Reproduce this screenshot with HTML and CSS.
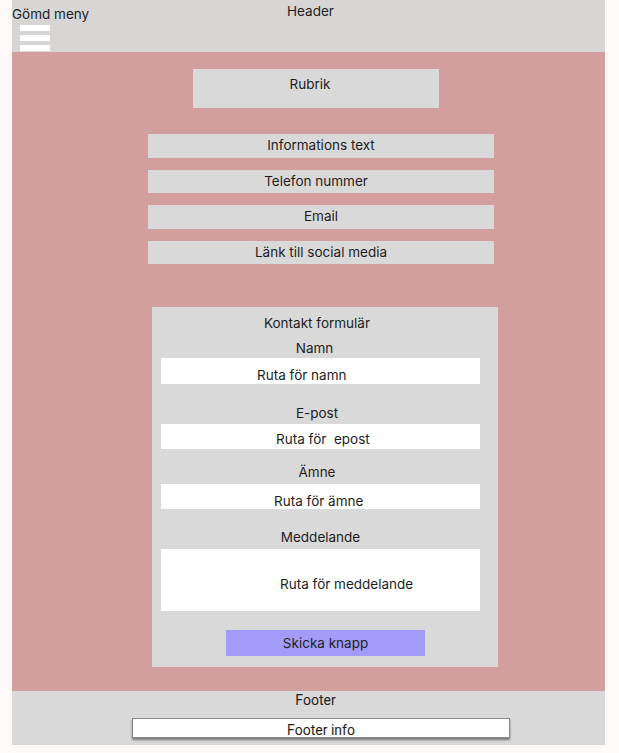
FILE: index.html
```html
<!DOCTYPE html>
<html lang="sv">
<head>
<meta charset="utf-8">
<title>Kontakt</title>
<link rel="stylesheet" href="styles.css">
</head>
<body>
<div class="frame">
  <header class="header">
    <div class="header-title">Header</div>
    <div class="menu">
      <div class="menu-label">Gömd meny</div>
      <div class="burger"><span></span><span></span><span></span></div>
    </div>
  </header>
  <main class="main">
    <div class="rubrik">Rubrik</div>
    <div class="info-list">
      <div class="info-row">Informations text</div>
      <div class="info-row info-row-tel">Telefon nummer</div>
      <div class="info-row">Email</div>
      <div class="info-row">Länk till social media</div>
    </div>
    <form class="contact">
      <div class="contact-title">Kontakt formulär</div>
      <div class="label label-namn">Namn</div>
      <div class="field field-namn">Ruta för namn</div>
      <div class="label label-epost">E-post</div>
      <div class="field field-epost">Ruta för&nbsp; epost</div>
      <div class="label label-amne">Ämne</div>
      <div class="field field-amne">Ruta för ämne</div>
      <div class="label label-medd">Meddelande</div>
      <div class="field field-medd">Ruta för meddelande</div>
      <div class="submit">Skicka knapp</div>
    </form>
  </main>
  <footer class="footer">
    <div class="footer-title">Footer</div>
    <div class="footer-info">Footer info</div>
  </footer>
</div>
</body>
</html>
```

FILE: styles.css
```css
* { box-sizing: border-box; }
html, body { margin: 0; padding: 0; }
body {
  background: #fdf9f8;
  font-family: Inter, "Noto Sans", sans-serif;
  font-size: 13.5px;
  color: #1e1e1e;
}
.frame {
  width: 593px;
  margin-left: 12px;
}
.header {
  height: 52px;
  background: #d8d5d5;
  display: grid;
  grid-template-columns: 1fr;
  grid-template-rows: 1fr;
}
.header-title,
.menu {
  grid-column: 1;
  grid-row: 1;
}
.header-title {
  justify-self: center;
  align-self: start;
  margin-top: 3px;
  margin-left: 4px;
  line-height: 17px;
}
.menu {
  justify-self: start;
  align-self: start;
  margin-top: 6px;
}
.menu-label {
  line-height: 17px;
}
.burger {
  margin-top: 1.5px;
  margin-left: 8px;
  display: flex;
  flex-direction: column;
  gap: 4px;
}
.burger span {
  display: block;
  width: 30px;
  height: 6px;
  background: #ffffff;
}
.main {
  height: 639px;
  background: #d29e9e;
  padding-top: 17px;
  display: flex;
  flex-direction: column;
  align-items: flex-start;
}
.rubrik {
  margin-left: 181px;
  width: 246px;
  height: 39px;
  padding-top: 7px;
  line-height: 17px;
  text-align: center;
  background: #d9d9d9;
  padding-right: 12px;
}
.info-list {
  margin-top: 26px;
  margin-left: 136px;
  width: 346px;
  display: flex;
  flex-direction: column;
  gap: 12px;
}
.info-row {
  height: 23.5px;
  line-height: 23px;
  text-align: center;
  background: #d9d9d9;
}
.info-row-tel { padding-right: 10px; }
.contact {
  margin: 43px 0 0 140px;
  width: 346px;
  height: 360px;
  background: #d9d9d9;
  padding: 7.5px 0 0 9px;
  display: flex;
  flex-direction: column;
  align-items: flex-start;
}
.contact-title,
.label {
  width: 319px;
  line-height: 17px;
  text-align: center;
  padding-right: 7px;
}
.contact-title { padding-right: 7px; }
.label-namn { margin-top: 8px; padding-right: 12px; }
.label-epost { margin-top: 20.5px; }
.label-amne { margin-top: 14.5px; }
.label-medd { margin-top: 19.5px; padding-right: 0; }
.field {
  width: 319px;
  background: #ffffff;
  line-height: 17px;
}
.field-namn { margin-top: 1.5px; height: 26px; padding: 8.5px 0 0 96px; }
.field-epost { margin-top: 2.5px; height: 25px; padding: 7px 0 0 115px; }
.field-amne { margin-top: 3.5px; height: 25px; padding: 8.5px 0 0 113px; }
.field-medd { margin-top: 3.5px; height: 61.5px; padding: 26.5px 0 0 119px; }
.submit {
  margin-top: 19.5px;
  margin-left: 65px;
  width: 199px;
  height: 26px;
  line-height: 26px;
  text-align: center;
  background: #a29bf7;
  font-size: 13.5px;
}
.footer {
  height: 54px;
  background: #d9d9d9;
  display: flex;
  flex-direction: column;
  align-items: flex-start;
  font-family: Roboto, "Liberation Sans", sans-serif;
  font-size: 14px;
}
.footer-title {
  width: 100%;
  padding-top: 1px;
  padding-left: 14px;
  line-height: 16px;
  text-align: center;
}
.footer-info {
  margin-top: 10px;
  margin-left: 120px;
  width: 378px;
  height: 20px;
  line-height: 18px;
  text-align: center;
  background: #ffffff;
  border: 1px solid #8a8a8a;
  box-shadow: 0 2px 2px rgba(0, 0, 0, 0.45);
  padding-top: 2px;
}
```
